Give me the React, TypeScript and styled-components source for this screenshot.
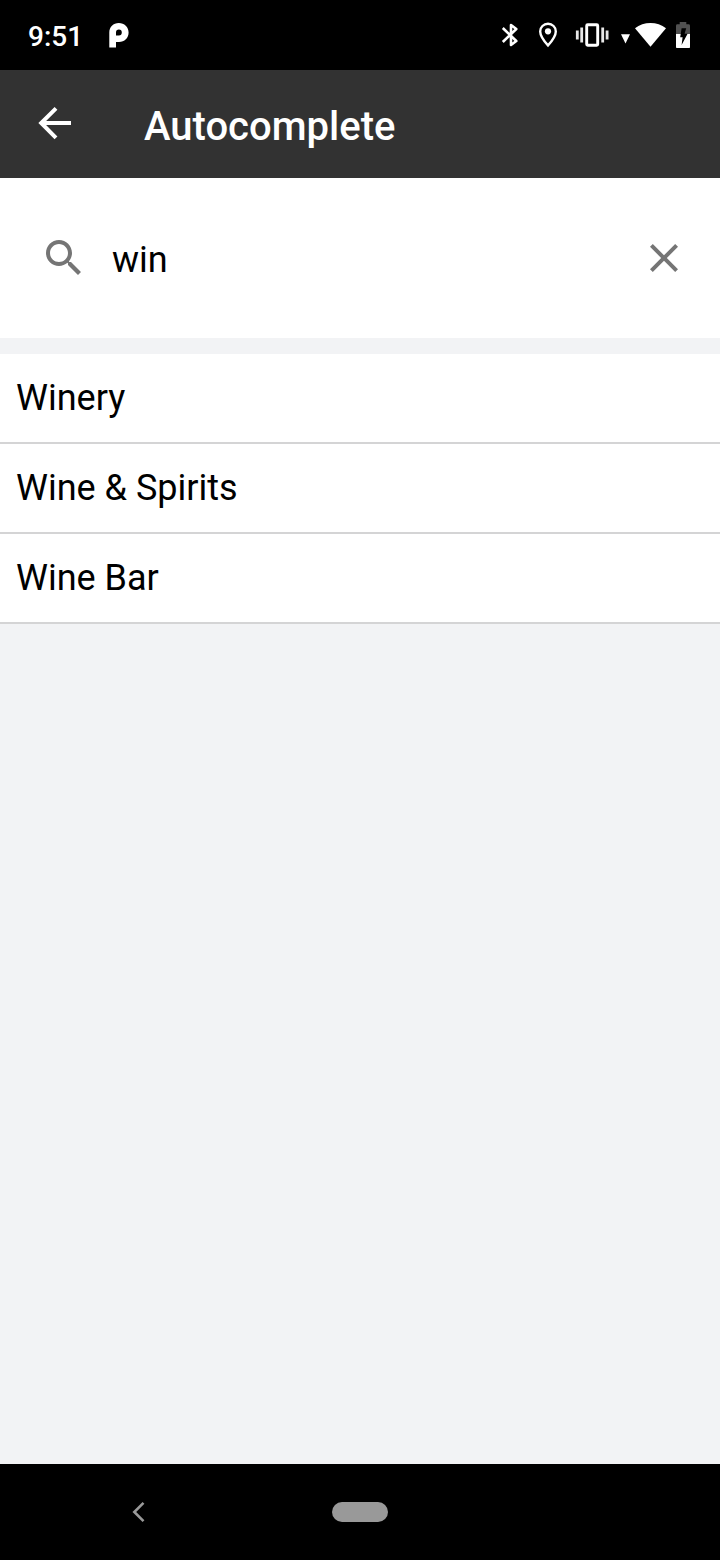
import React from "react";
import styled, { createGlobalStyle } from "styled-components";

const GlobalStyle = createGlobalStyle`
  *, *::before, *::after { box-sizing: border-box; }
  body { margin: 0; background: #000; font-family: Roboto, "Noto Sans", sans-serif; }
  button { border: 0; padding: 0; background: none; }
`;

const Screen = styled.div`
  display: flex;
  flex-direction: column;
  width: 720px;
  height: 1560px;
  overflow: hidden;
  background: #f2f3f5;
`;

const StatusBar = styled.div`
  display: flex;
  align-items: center;
  justify-content: space-between;
  height: 70px;
  padding: 0 30px 0 28px;
  background: #000;
  color: #fff;
`;

const StatusGroup = styled.div`
  display: flex;
  align-items: center;
`;

const Clock = styled.span`
  width: 81px;
  padding-top: 4px;
  font-size: 28px;
  font-weight: 500;
  line-height: 34px;
`;

const Glyph = styled.svg<{ $before?: number }>`
  display: block;
  flex: none;
  margin-left: ${(p) => p.$before ?? 0}px;
`;

const Header = styled.header`
  display: flex;
  align-items: center;
  height: 108px;
  padding-left: 36px;
  background: #323232;
  color: #fff;
`;

const IconButton = styled.button`
  display: flex;
  color: inherit;
`;

const Title = styled.h1`
  margin: 0 0 0 72px;
  padding-top: 6px;
  font-size: 40px;
  font-weight: 500;
  line-height: 48px;
`;

const SearchBar = styled.div`
  display: flex;
  align-items: center;
  height: 160px;
  padding: 0 40px 0 44px;
  background: #fff;
  color: #757575;
`;

const SearchInput = styled.input`
  flex: 1;
  min-width: 0;
  height: 48px;
  margin-left: 28px;
  padding: 4px 0 0;
  border: 0;
  outline: 0;
  background: transparent;
  color: #000;
  font: 400 36px/44px Roboto, "Noto Sans", sans-serif;
`;

const Results = styled.ul`
  flex: 1;
  margin: 16px 0 0;
  padding: 0;
  list-style: none;
`;

const ResultRow = styled.li`
  display: flex;
  align-items: center;
  height: 90px;
  padding-left: 16px;
  border-bottom: 2px solid #d4d4d5;
  background: #fff;
  color: #000;
  font-size: 36px;
  line-height: 44px;
`;

const NavBar = styled.nav`
  display: grid;
  grid-template-columns: 332px 56px 332px;
  align-items: center;
  height: 96px;
  background: #000;
  color: #999;
`;

const BackSlot = styled.div`
  padding-left: 130px;
`;

const HomePill = styled.div`
  height: 20px;
  border-radius: 10px;
  background: #999;
`;

const results = ["Winery", "Wine & Spirits", "Wine Bar"];

export default function App() {
  return (
    <>
      <GlobalStyle />
      <Screen>
        <StatusBar>
          <StatusGroup>
            <Clock>9:51</Clock>
            <Glyph width="20" height="26" viewBox="109 22 20 26">
              <path
                fill="#fff"
                fillRule="evenodd"
                d="M109.3 47.6V32.5C109.3 27 113.3 23 118.8 23S128.6 27 128.6 32.5S124.5 42 119 42H116V47.6ZM116 32.4a2.9 2.9 0 1 1 2.9 3H116Z"
              />
            </Glyph>
          </StatusGroup>
          <StatusGroup>
            <Glyph width="18" height="26" viewBox="501 22 18 26">
              <path
                d="M502.8 28L516.3 41L511 45V25L516.3 29L502.8 42"
                fill="none"
                stroke="#fff"
                strokeWidth="2.6"
                strokeLinejoin="round"
              />
            </Glyph>
            <Glyph $before={19} width="20" height="26" viewBox="538 22 20 26">
              <path
                d="M548 23.8c-4.4 0-7.8 3.3-7.8 7.6c0 5.3 7.8 14 7.8 14s7.8-8.7 7.8-14c0-4.3-3.4-7.6-7.8-7.6z"
                fill="none"
                stroke="#fff"
                strokeWidth="2.4"
              />
              <circle cx="548" cy="31.3" r="3.1" fill="#fff" />
            </Glyph>
            <Glyph $before={17} width="34" height="26" viewBox="575 22 34 26">
              <rect x="586.7" y="24.8" width="11" height="20.5" rx="1" fill="none" stroke="#fff" strokeWidth="2.9" />
              <path
                d="M577.3 30.5V39.5M581.7 27.5V42.5M602.7 27.5V42.5M607.1 30.5V39.5"
                stroke="#e8e8e8"
                strokeWidth="2.8"
              />
            </Glyph>
            <Glyph $before={12} width="9" height="26" viewBox="621 22 9 26">
              <path d="M621 34.2H630L625.5 43.4Z" fill="#fff" />
            </Glyph>
            <Glyph $before={5} width="31" height="26" viewBox="635 22 31 26">
              <path d="M635 28.2C643.5 21.2 657.5 21.2 666 28.2L650.5 46.8Z" fill="#fff" />
            </Glyph>
            <Glyph $before={10} width="14" height="26" viewBox="676 22 14 26">
              <path d="M676 34V25.7Q676 24.3 677.4 24.3H679.7V22H686.3V24.3H688.6Q690 24.3 690 25.7V34Z" fill="#515151" />
              <path d="M676 34H690V47.2Q690 48 689.2 48H676.8Q676 48 676 47.2Z" fill="#fff" />
              <path d="M681.6 28.2H686.2L684.6 33.8H687.6L681.6 45L682.6 37.2H680.2Z" fill="#000" />
            </Glyph>
          </StatusGroup>
        </StatusBar>

        <Header>
          <IconButton aria-label="Back">
            <Glyph width="36" height="36" viewBox="36 106 36 36">
              <path
                d="M71 123H41M56 108.4L41.2 123L56 137.8"
                fill="none"
                stroke="currentColor"
                strokeWidth="4"
              />
            </Glyph>
          </IconButton>
          <Title>Autocomplete</Title>
        </Header>

        <SearchBar>
          <Glyph width="40" height="40" viewBox="2 2 20 20">
            <path
              fill="currentColor"
              d="M15.5 14h-.79l-.28-.27C15.41 12.59 16 11.11 16 9.5 16 5.91 13.09 3 9.5 3S3 5.91 3 9.5 5.91 16 9.5 16c1.61 0 3.09-.59 4.23-1.57l.27.28v.79l5 4.99L20.49 19l-4.99-5zm-6 0C7.01 14 5 11.99 5 9.5S7.01 5 9.5 5 14 7.01 14 9.5 11.99 14 9.5 14z"
            />
          </Glyph>
          <SearchInput aria-label="Search" defaultValue="win" />
          <IconButton aria-label="Clear">
            <Glyph width="32" height="32" viewBox="4 4 16 16">
              <path
                fill="currentColor"
                d="M19 6.41L17.59 5 12 10.59 6.41 5 5 6.41 10.59 12 5 17.59 6.41 19 12 13.41 17.59 19 19 17.59 13.41 12z"
              />
            </Glyph>
          </IconButton>
        </SearchBar>

        <Results>
          {results.map((name) => (
            <ResultRow key={name}>{name}</ResultRow>
          ))}
        </Results>

        <NavBar>
          <BackSlot>
            <Glyph width="16" height="22" viewBox="130 1501 16 22">
              <path d="M143.5 1502.8L134.3 1512L143.5 1521.2" fill="none" stroke="currentColor" strokeWidth="2.6" />
            </Glyph>
          </BackSlot>
          <HomePill />
        </NavBar>
      </Screen>
    </>
  );
}
